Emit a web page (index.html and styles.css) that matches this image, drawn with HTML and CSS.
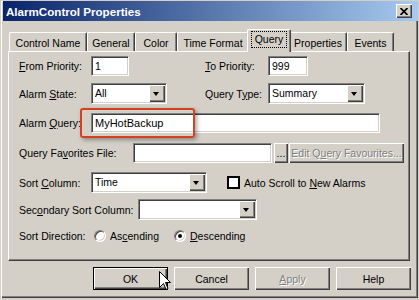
FILE: index.html
```html
<!DOCTYPE html>
<html lang="en">
<head>
    <meta charset="UTF-8">
    <title>AlarmControl Properties</title>
    <link rel="stylesheet" href="styles.css">
</head>
<body>
    <div class="window">
        <div class="titlebar">
            <span class="title">AlarmControl Properties</span>
            <div class="close">
                <svg width="8" height="7" viewBox="0 0 8 7"><path d="M0.5 0 L7.5 7 M7.5 0 L0.5 7" stroke="#000" stroke-width="1.7"/></svg>
            </div>
        </div>

        <div class="tabs">
            <div class="tab tab-name">Control Name</div>
            <div class="tab tab-general">General</div>
            <div class="tab tab-color">Color</div>
            <div class="tab tab-time">Time Format</div>
            <div class="tab tab-query active"><span class="focus">Query</span></div>
            <div class="tab tab-props">Properties</div>
            <div class="tab tab-events">Events</div>
        </div>

        <div class="panel">
            <div class="form">
                <div class="pair">
                    <span class="label"><u>F</u>rom Priority:</span>
                    <div class="field num-from">1</div>
                    <span class="label"><u>T</u>o Priority:</span>
                    <div class="field num-to">999</div>
                </div>

                <div class="pair">
                    <span class="label">Alarm <u>S</u>tate:</span>
                    <div class="select sel-state"><span class="value">All</span><span class="drop"></span></div>
                    <span class="label">Query T<u>y</u>pe:</span>
                    <div class="select sel-type"><span class="value">Summary</span><span class="drop"></span></div>
                </div>

                <div class="row">
                    <span class="label lbl">Alarm <u>Q</u>uery:</span>
                    <div class="field query">MyHotBackup</div>
                    <div class="highlight"></div>
                </div>

                <div class="row">
                    <span class="label lbl-fav">Query Fa<u>v</u>orites File:</span>
                    <div class="field fav"></div>
                    <button class="btn browse">...</button>
                    <button class="btn edit disabled">Edit Q<u>u</u>ery Favourites...</button>
                </div>

                <div class="row">
                    <span class="label lbl">Sort <u>C</u>olumn:</span>
                    <div class="select sel-sort"><span class="value">Time</span><span class="drop"></span></div>
                    <span class="check"></span>
                    <span class="check-text">Auto Scroll to <u>N</u>ew Alarms</span>
                </div>

                <div class="row">
                    <span class="label lbl-sec">Sec<u>o</u>ndary Sort Column:</span>
                    <div class="select sel-sec"><span class="value"></span><span class="drop"></span></div>
                </div>

                <div class="row">
                    <span class="label lbl-dir">Sort Direction:</span>
                    <span class="option opt-asc"><span class="radio"></span>As<u>c</u>ending</span>
                    <span class="option"><span class="radio on"></span><u>D</u>escending</span>
                </div>
            </div>
        </div>

        <div class="buttons">
            <button class="btn push default">OK</button>
            <button class="btn push">Cancel</button>
            <button class="btn push disabled"><u>A</u>pply</button>
            <button class="btn push">Help</button>
        </div>

        <svg class="cursor" width="12" height="20" viewBox="0 0 12 20">
            <path d="M0.5 0.5 V16.5 L4.5 12.5 L7 18.5 L9 17.5 L6.5 11.5 H11.5 Z" fill="#fff" stroke="#000"/>
        </svg>
    </div>
</body>
</html>
```

FILE: styles.css
```css
* {
    box-sizing: border-box;
}
body {
    margin: 0;
    background: #d4d0c8;
    font-family: 'Liberation Sans', Arial, sans-serif;
    font-size: 10.5px;
    color: #000;
    overflow: hidden;
}
u {
    text-underline-offset: 1px;
}
.window {
    position: relative;
    width: 418px;
    height: 298px;
    padding-top: 1px;
    background: #d4d0c8;
    box-shadow: inset 1px 1px #d4d0c8, inset 2px 2px #fff, inset -1px -1px #404040, inset -2px -2px #808080;
}

/* title bar */
.titlebar {
    display: flex;
    align-items: center;
    justify-content: space-between;
    height: 20px;
    margin-left: 3px;
    padding: 0 6px 0 3px;
    background: linear-gradient(to right, #0a246a, #a6caf0);
    color: #fff;
}
.title {
    font-weight: bold;
    font-size: 11.6px;
}
.close {
    display: flex;
    align-items: center;
    justify-content: center;
    width: 16px;
    height: 14px;
    background: #d4d0c8;
    box-shadow: inset 1px 1px #fff, inset -1px -1px #404040, inset -2px -2px #808080;
}

/* tabs */
.tabs {
    display: flex;
    align-items: flex-end;
    height: 22px;
    margin-top: 8px;
    padding-left: 9px;
}
.tab {
    display: flex;
    align-items: center;
    justify-content: center;
    height: 19px;
    padding-top: 1px;
    background: #d4d0c8;
    border: 1px solid;
    border-color: #fff #404040 transparent #fff;
    border-bottom: none;
    border-radius: 2px 2px 0 0;
    box-shadow: inset -1px 0 #808080;
}
.tab.active {
    position: relative;
    z-index: 1;
    height: 23px;
    margin: 0 -2px -1px;
    padding: 0 0 4px;
}
.tab-name { width: 78px; }
.tab-general { width: 48px; }
.tab-color { width: 42px; }
.tab-time { width: 72px; }
.tab-query { width: 44px; }
.tab-props { width: 58px; }
.tab-events { width: 47px; }
.focus {
    padding: 1px 3px 2px;
    outline: 1px dotted #000;
}

/* panel */
.panel {
    position: relative;
    width: 402px;
    height: 210px;
    margin-left: 8px;
    padding: 4px 0 0 10px;
    border: 1px solid;
    border-color: #fff #404040 #404040 #fff;
    box-shadow: inset -1px -1px #808080;
}
.form {
    display: grid;
    grid-template-rows: 27px 30px 30px 29px 27px 31px 13px;
}
.row {
    position: relative;
    display: flex;
    align-items: center;
    align-self: start;
}
.pair {
    display: grid;
    grid-template-columns: 72px 114px 63px auto;
    align-items: center;
    align-self: start;
}
.label {
    white-space: nowrap;
}
.lbl { width: 72px; }
.lbl-fav { width: 114px; }
.lbl-sec { width: 119px; }
.lbl-dir { width: 75px; }

/* sunken fields */
.field, .select {
    height: 20px;
    padding-left: 3px;
    background: #fff;
    border: 1px solid;
    border-color: #808080 #fff #fff #808080;
    box-shadow: inset 1px 1px #404040, inset -1px -1px #d4d0c8;
    line-height: 18px;
}
.num-from { width: 38px; }
.num-to { width: 40px; }
.query { width: 289px; font-size: 11px; }
.fav { width: 139px; }

.select {
    display: flex;
    height: 21px;
    padding: 1px 1px 1px 3px;
    line-height: 17px;
}
.select .value {
    flex: 1;
}
.drop {
    position: relative;
    width: 16px;
    height: 17px;
    background: #d4d0c8;
    box-shadow: inset 1px 1px #fff, inset -1px -1px #404040, inset -2px -2px #808080;
}
.drop::after {
    content: '';
    position: absolute;
    left: 4px;
    top: 7px;
    border-style: solid;
    border-width: 4px 3.5px 0;
    border-color: #000 transparent transparent;
}
.sel-state { width: 76px; }
.sel-type { width: 97px; }
.sel-sort { width: 116px; }
.sel-sec { width: 119px; }

.highlight {
    position: absolute;
    left: 61px;
    top: -5px;
    width: 115px;
    height: 30px;
    border: 2px solid #d5401e;
    border-radius: 3px;
    box-shadow: 2px 2px 4px rgba(0, 0, 0, 0.35);
}

/* buttons */
.btn {
    height: 20px;
    padding: 0;
    font: inherit;
    color: #000;
    background: #d4d0c8;
    border: none;
    box-shadow: inset 1px 1px #fff, inset -1px -1px #404040, inset -2px -2px #808080;
}
.btn.disabled {
    color: #808080;
    text-shadow: 1px 1px #fff;
}
.browse {
    width: 14px;
    margin-left: 2px;
    line-height: 14px;
}
.edit {
    width: 115px;
    margin-left: 1px;
}

.check {
    width: 13px;
    height: 13px;
    margin-left: 20px;
    background: #fff;
    border: 2px solid #000;
}
.check-text {
    margin-left: 4px;
}

.option {
    display: flex;
    align-items: center;
}
.opt-asc {
    width: 80px;
}
.radio {
    position: relative;
    width: 12px;
    height: 12px;
    margin-right: 4px;
    background: #fff;
    border-radius: 50%;
    border: 1px solid;
    border-color: #808080 #fff #fff #808080;
    box-shadow: inset 1px 1px #404040, inset -1px -1px #d4d0c8;
}
.radio.on::after {
    content: '';
    position: absolute;
    left: 3px;
    top: 3px;
    width: 4px;
    height: 4px;
    border-radius: 50%;
    background: #000;
}

.buttons {
    display: flex;
    gap: 6px;
    margin-top: 6px;
    padding-left: 93px;
}
.push {
    width: 75px;
    height: 23px;
}
.push.default {
    border: 1px solid #000;
}

.cursor {
    position: absolute;
    left: 159px;
    top: 271px;
}
```
